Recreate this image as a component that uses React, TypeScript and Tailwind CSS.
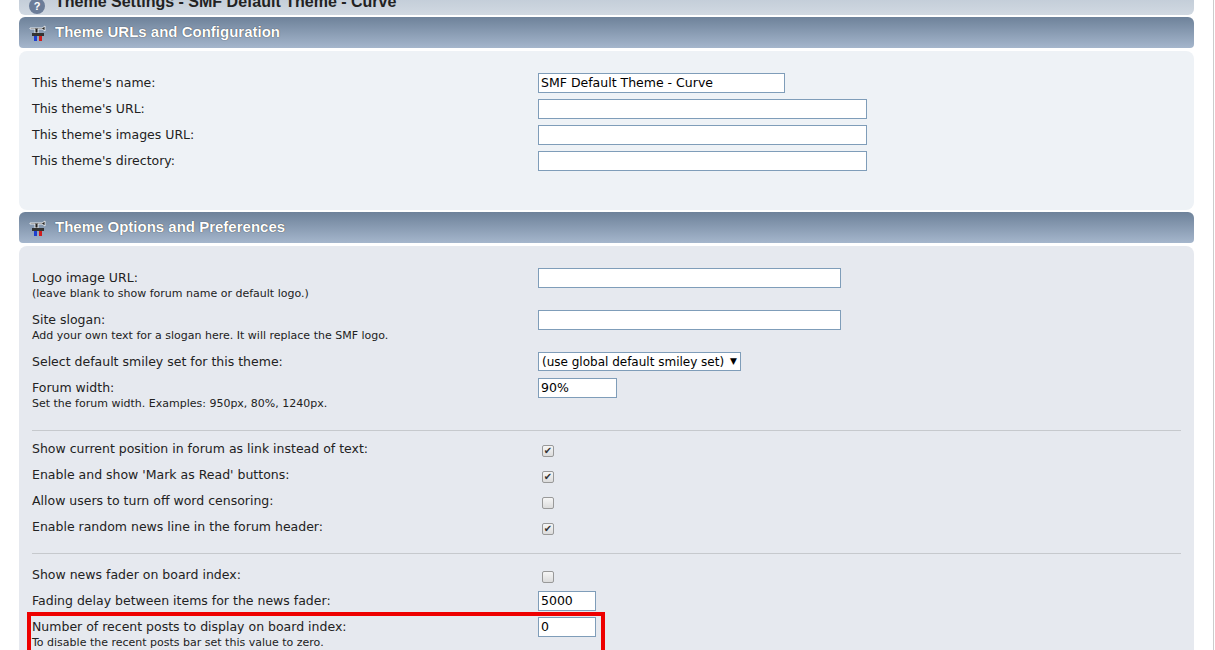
import React from "react";

const font = { fontFamily: "Verdana, 'DejaVu Sans', sans-serif" };
const hfont = { fontFamily: "'Liberation Sans', Arial, sans-serif" };

function Icon() {
  return (
    <svg width="18" height="18" viewBox="0 0 18 18" className="mr-2 shrink-0">
      <path d="M1 4h12l3 -2v5l-3 -2H9v4H6V5H1z" fill="#222" stroke="#fff" strokeWidth="0.8" />
      <rect x="5" y="12" width="3" height="5" fill="#1d3fd0" />
      <rect x="10" y="12" width="3" height="5" fill="#d01d1d" />
      <rect x="3" y="9" width="12" height="3" fill="#333" />
    </svg>
  );
}

function Header({ title }: { title: string }) {
  return (
    <div className="h-[31px] rounded-t-[6px] rounded-b-[4px] bg-gradient-to-b from-[#6e829a] to-[#a5b6cc] flex items-center pl-[10px] text-white font-bold text-[15px]" style={{ ...hfont, textShadow: "0 0 1px #222" }}>
      <Icon />
      {title}
    </div>
  );
}

function Input({ w, v = "", h = 20 }: { w: number; v?: string; h?: number }) {
  return (
    <div className="bg-white border border-[#7f9db9] px-[2px] text-[12.5px] text-black flex items-center whitespace-nowrap" style={{ width: w, height: h }}>
      {v}
    </div>
  );
}

function Check({ on }: { on: boolean }) {
  return (
    <div className="w-[12px] h-[12px] ml-[4px] rounded-[2px] border border-[#999] bg-gradient-to-b from-[#f6f6f6] to-[#dcdcdc] flex items-center justify-center text-[10px] leading-none text-[#333]">
      {on ? "✔" : ""}
    </div>
  );
}

function Row({ label, sub, h, children }: { label: string; sub?: string; h: number; children: React.ReactNode }) {
  return (
    <div className="flex items-start" style={{ height: h }}>
      <div className="w-[506px] pt-[2px]">
        <div className="text-[12.5px] leading-[16px] text-[#222]">{label}</div>
        {sub && <div className="text-[11px] leading-[15px] text-[#222]">{sub}</div>}
      </div>
      <div>{children}</div>
    </div>
  );
}

export default function App() {
  return (
    <div className="w-[1215px] h-[650px] overflow-hidden bg-white relative" style={font}>
      <div className="absolute right-[1px] top-0 bottom-0 w-[1px] bg-[#ccc]" />
      <div className="ml-[19px] w-[1175px] mt-[-10px]">
        <div className="h-[25px] rounded-b-[6px] bg-gradient-to-b from-[#bcc7d3] to-[#d1d9e2] flex items-end pl-[10px] pb-[1px] text-[16px] font-bold text-[#222]" style={hfont}>
          <span className="w-[16px] h-[16px] rounded-full bg-[#6b7d99] mr-[10px] text-white text-[11px] flex items-center justify-center">?</span>
          Theme Settings - SMF Default Theme - Curve
        </div>
        <div className="h-[2px]" />
        <Header title="Theme URLs and Configuration" />
        <div className="h-[3px]" />
        <div className="bg-[#eef2f6] rounded-[8px] h-[159px] pt-[22px] px-[13px]">
          <Row label="This theme's name:" h={26}><Input w={247} v="SMF Default Theme - Curve" /></Row>
          <Row label="This theme's URL:" h={26}><Input w={329} /></Row>
          <Row label="This theme's images URL:" h={26}><Input w={329} /></Row>
          <Row label="This theme's directory:" h={26}><Input w={329} /></Row>
        </div>
        <div className="h-[2px]" />
        <Header title="Theme Options and Preferences" />
        <div className="h-[3px]" />
        <div className="bg-[#e6e9ef] rounded-t-[8px] h-[420px] pt-[22px] px-[13px]">
          <Row label="Logo image URL:" sub="(leave blank to show forum name or default logo.)" h={42}><Input w={303} /></Row>
          <Row label="Site slogan:" sub="Add your own text for a slogan here. It will replace the SMF logo." h={42}><Input w={303} /></Row>
          <Row label="Select default smiley set for this theme:" h={26}>
            <div className="w-[203px] h-[19px] bg-white border border-[#7f9db9] flex items-center justify-between px-[3px] text-[12px] text-black whitespace-nowrap overflow-hidden">
              <span>(use global default smiley set)</span><span className="text-[9px]">▼</span>
            </div>
          </Row>
          <Row label="Forum width:" sub="Set the forum width. Examples: 950px, 80%, 1240px." h={52}><Input w={79} v="90%" /></Row>
          <div className="border-t border-[#c6c9cd] mb-[8px]" />
          {[
            ["Show current position in forum as link instead of text:", true],
            ["Enable and show 'Mark as Read' buttons:", true],
            ["Allow users to turn off word censoring:", false],
            ["Enable random news line in the forum header:", true],
          ].map(([l, on]) => (
            <Row key={l as string} label={l as string} h={26}><div className="pt-[6px]"><Check on={on as boolean} /></div></Row>
          ))}
          <div className="border-t border-[#c6c9cd] mt-[10px] mb-[11px]" />
          <Row label="Show news fader on board index:" h={26}><div className="pt-[6px]"><Check on={false} /></div></Row>
          <Row label="Fading delay between items for the news fader:" h={26}><Input w={58} v="5000" /></Row>
          <div className="relative">
            <div className="absolute left-[-5px] top-[-5px] w-[578px] h-[60px] border-[4px] border-[#e00] pointer-events-none" />
            <Row label="Number of recent posts to display on board index:" sub="To disable the recent posts bar set this value to zero." h={40}><Input w={58} v="0" /></Row>
          </div>
        </div>
      </div>
    </div>
  );
}
